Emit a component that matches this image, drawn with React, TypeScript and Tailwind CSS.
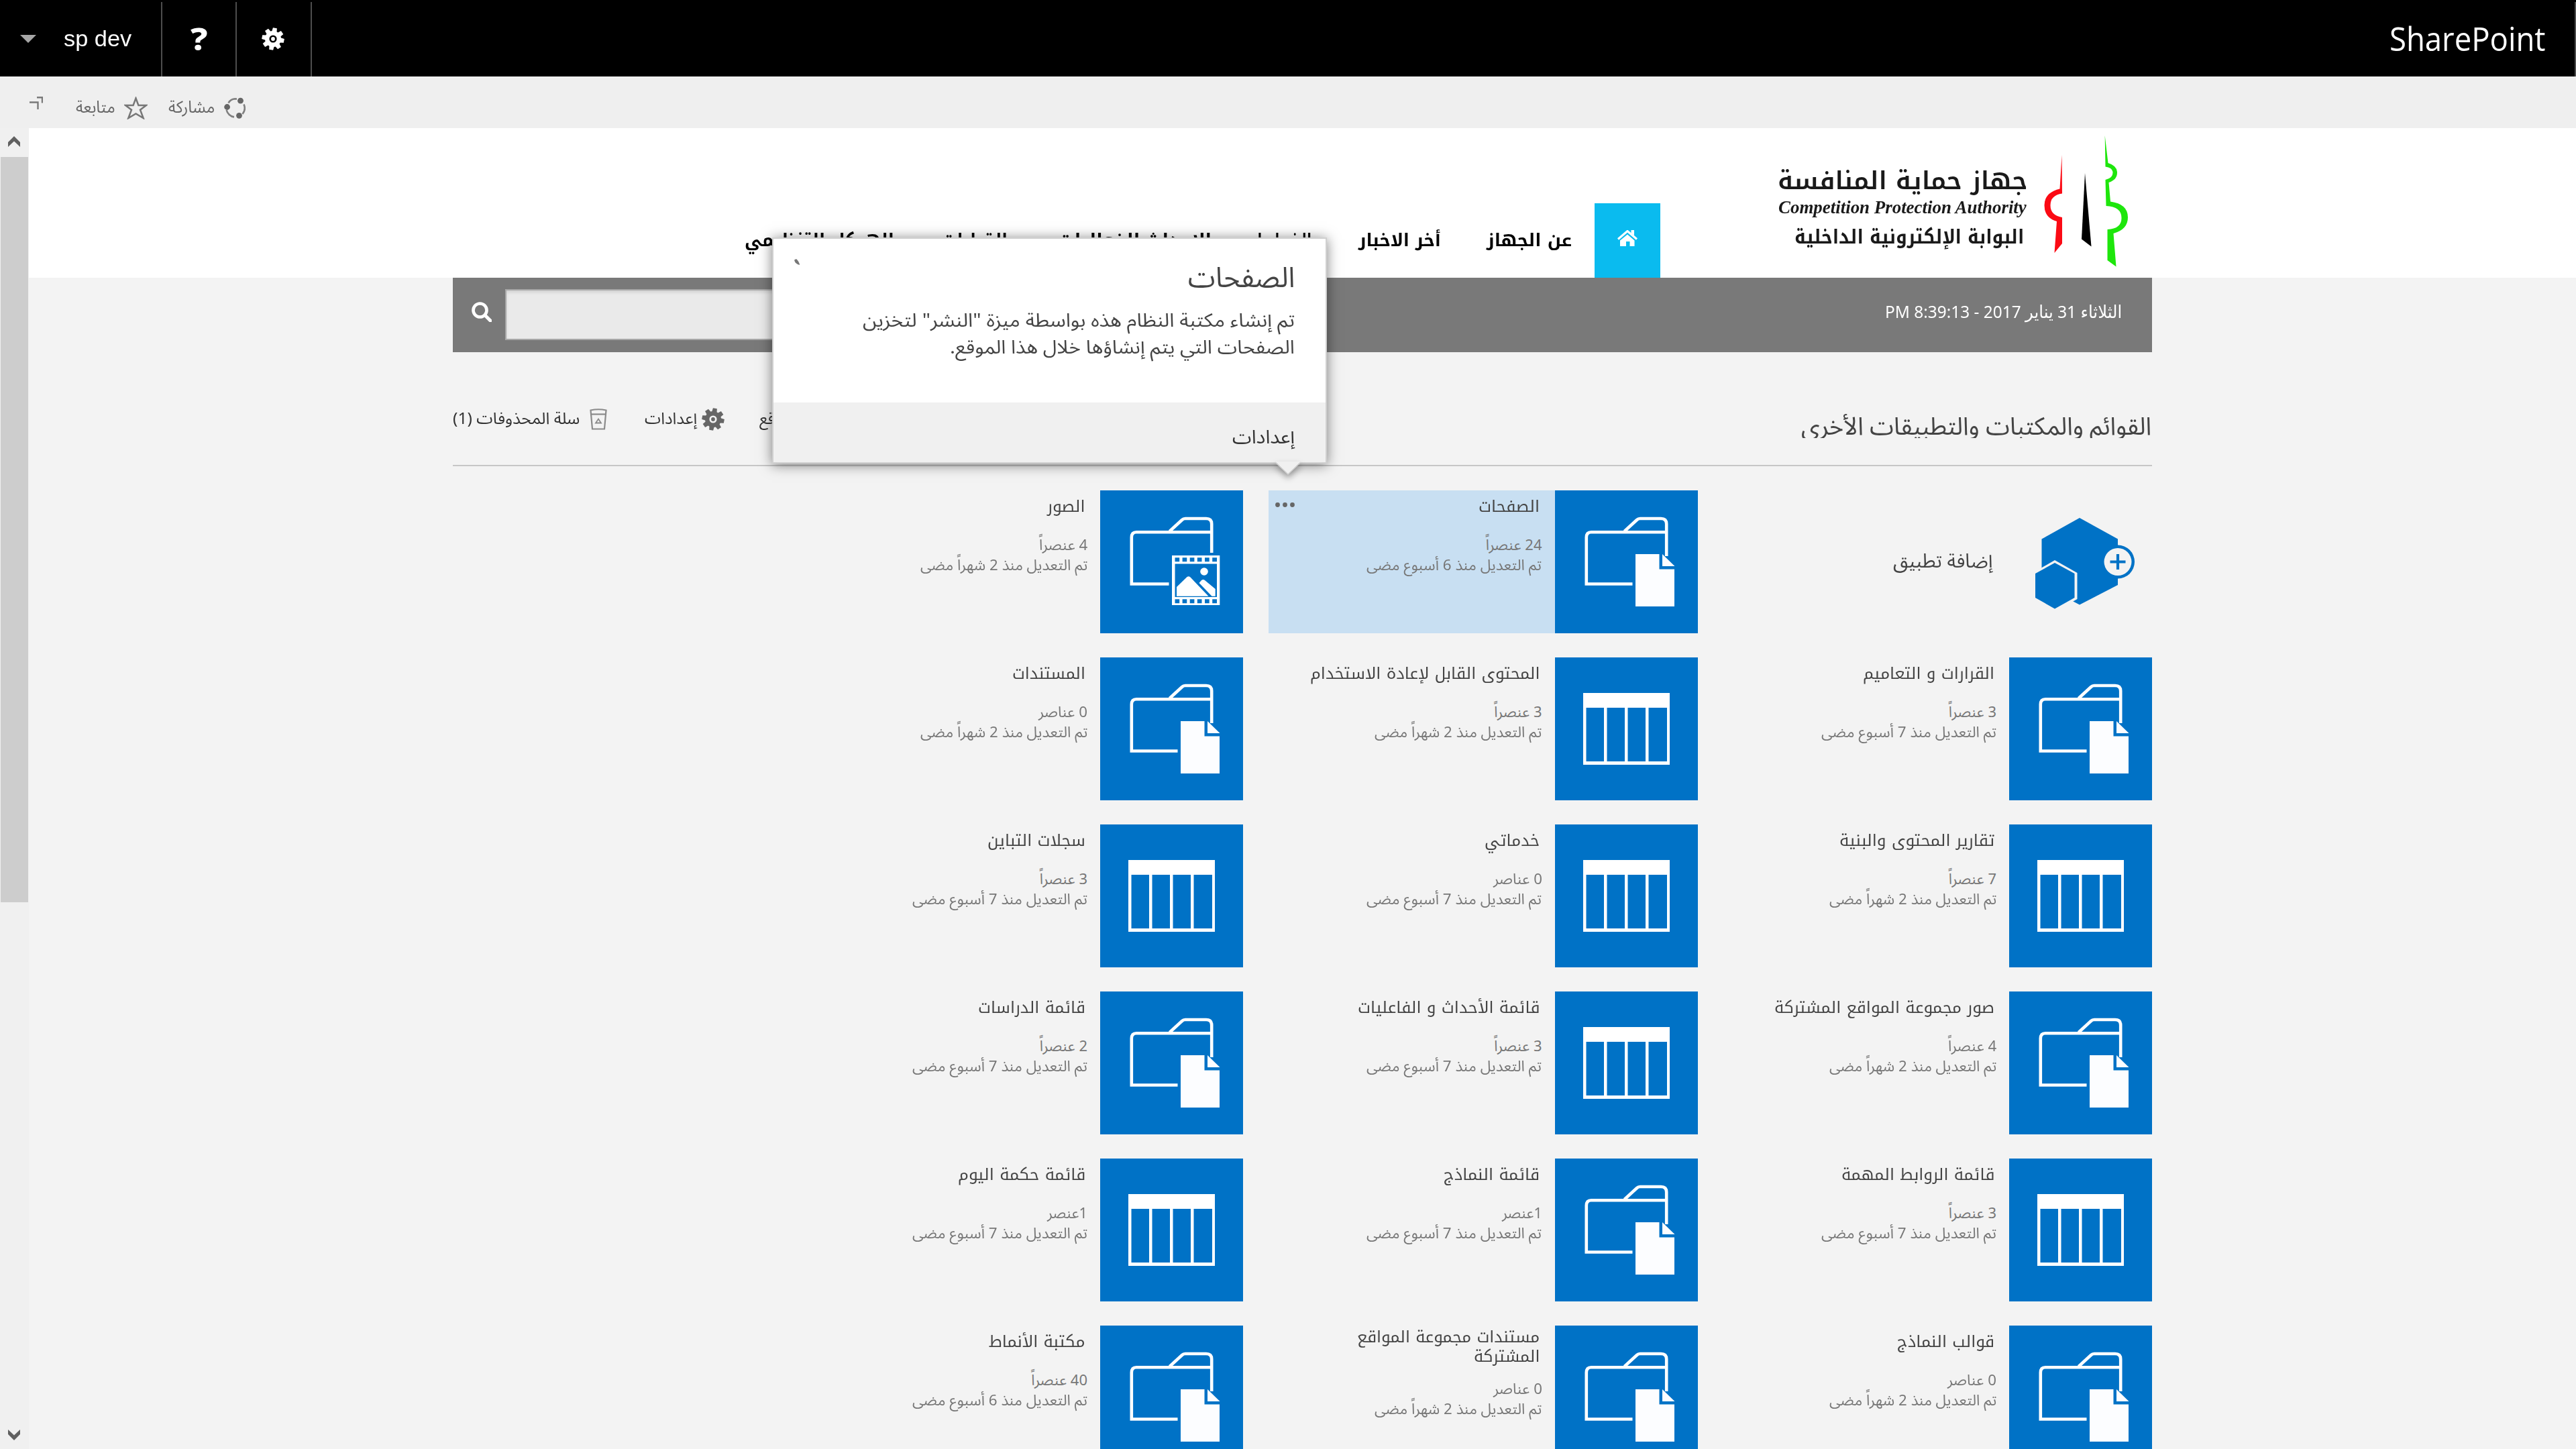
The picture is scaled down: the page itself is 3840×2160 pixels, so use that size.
import { useLayoutEffect, useRef, useState } from "react";
import type { ReactNode } from "react";

const KUFI = "font-['Noto_Kufi_Arabic','Noto_Sans','DejaVu_Sans',sans-serif]";
const SANS = "font-['Noto_Sans_Arabic','Noto_Sans','DejaVu_Sans',sans-serif]";

type LineProps = {
  /** width the line is condensed or stretched to */
  w: number;
  /** size, colour and font classes */
  className?: string;
  /** height class of the strut that fixes the baseline */
  strut: string;
  ltr?: boolean;
  children: ReactNode;
};

/** One line of text set on a fixed baseline and fitted to a width. */
function Line({ w, className = "", strut, ltr = false, children }: LineProps) {
  const ref = useRef<HTMLSpanElement>(null);
  const [scale, setScale] = useState(1);
  useLayoutEffect(() => {
    const fit = () => {
      if (ref.current) setScale(w / ref.current.offsetWidth);
    };
    fit();
    document.fonts?.ready.then(fit);
  }, [w]);
  return (
    <div
      dir={ltr ? "ltr" : "rtl"}
      className="flex shrink-0 items-baseline leading-[0] whitespace-nowrap"
      style={{ width: w }}
    >
      <span className={`w-0 shrink-0 ${strut}`} />
      <span
        ref={ref}
        className={`shrink-0 ${ltr ? "origin-left" : "origin-right"} ${className}`}
        style={{ transform: `scaleX(${scale})` }}
      >
        {children}
      </span>
    </div>
  );
}

function Gear({ className }: { className: string }) {
  const teeth = [0, 45, 90, 135, 180, 225, 270, 315];
  return (
    <svg viewBox="-17 -17 34 34" className={className}>
      <g fill="currentColor">
        {teeth.map((a) => (
          <path key={a} d="M-3.9 -9 L-3 -16.6 H3 L3.9 -9Z" transform={`rotate(${a + 10})`} />
        ))}
      </g>
      <circle r="8.8" fill="none" stroke="currentColor" strokeWidth="6.4" />
      <circle r="2.9" fill="currentColor" />
    </svg>
  );
}

function TopBar() {
  return (
    <header className="flex h-[114px] shrink-0 bg-black text-white">
      <div className="flex w-[240px] items-start">
        <svg viewBox="0 0 24 12" className="mt-[52px] ml-[30px] h-3 w-6 text-[#a6a6a6]">
          <path d="M0 0H24L12 12Z" fill="currentColor" />
        </svg>
        <div className="ml-[41px]">
          <Line ltr w={101} strut="h-[69px]" className="font-['Liberation_Sans',sans-serif] text-[33px]">
            sp dev
          </Line>
        </div>
      </div>
      <div className="mt-[3px] flex w-[111px] border-l-2 border-[#4d4d4d] pl-[42px]">
        <Line ltr w={26} strut="h-[72px]" className="font-['Noto_Sans',sans-serif] text-[46px] font-extrabold">
          ?
        </Line>
      </div>
      <div className="mt-[3px] flex w-[114px] border-x-2 border-[#4d4d4d] pl-[37px]">
        <Gear className="mt-[38px] h-[34px] w-[34px]" />
      </div>
      <div className="mt-[3px] ml-auto flex border-r-2 border-[#4d4d4d] pr-[43px]">
        <Line ltr w={233} strut="h-[73px]" className="font-['Open_Sans',sans-serif] text-[49px]">
          SharePoint
        </Line>
      </div>
    </header>
  );
}

function ActionBar() {
  return (
    <div className="flex h-[77px] shrink-0 bg-[#efefef] text-[#666666]">
      <svg viewBox="0 0 20 19" className="mt-[30px] ml-[44px] h-[19px] w-5">
        <path d="M11 1.2H19V9.5M0 8.5H12.5V19" fill="none" stroke="#7a7a7a" strokeWidth="2.4" />
      </svg>
      <div className="ml-[49px]">
        <Line w={59} strut="h-[54px]" className={`${SANS} text-[25px]`}>
          متابعة
        </Line>
      </div>
      <svg viewBox="0 0 35 34" className="mt-[30px] ml-[13px] h-[34px] w-[35px]">
        <path
          d="M17.5 2.5L21.4 13H33L24 19.8L28.6 32L17.5 25.4L6.4 32L11 19.8L2 13H13.6Z"
          fill="none"
          stroke="#777777"
          strokeWidth="2.5"
        />
      </svg>
      <div className="ml-[31px]">
        <Line w={69} strut="h-[54px]" className={`${SANS} text-[25px]`}>
          مشاركة
        </Line>
      </div>
      <svg viewBox="0 0 32 32" className="mt-[31px] ml-[14px] h-8 w-8">
        <g fill="none" stroke="#808080" strokeWidth="2.6">
          <path d="M6.5 8.5C9.5 3.5 14 1.8 19 2.6" />
          <path d="M29.5 10.5C31.8 16 30.5 21.5 27.5 25" />
          <path d="M3.6 19C5 24.5 9.5 28.8 15 29.4" />
        </g>
        <circle cx="24.5" cy="5.2" r="4.4" fill="#666" />
        <circle cx="4.6" cy="14.5" r="4.4" fill="#666" />
        <circle cx="22.5" cy="27.3" r="4.4" fill="#666" />
      </svg>
    </div>
  );
}

function ScrollBar() {
  return (
    <div className="flex w-[43px] shrink-0 flex-col bg-[#f0f0f0] text-[#606060]">
      <svg viewBox="0 0 18 16" className="mt-3 ml-3 h-4 w-[18px]">
        <path d="M9 0L18 9V16L9 7.5L0 16V9Z" fill="currentColor" />
      </svg>
      <div className="mt-[15px] ml-px h-[1111px] w-[41px] bg-[#cdcdcd]" />
      <svg viewBox="0 0 18 16" className="mt-auto mb-[13px] ml-3 h-4 w-[18px]">
        <path d="M9 16L18 7V0L9 8.5L0 0V7Z" fill="currentColor" />
      </svg>
    </div>
  );
}

function Logo() {
  return (
    <div className="flex items-start gap-[22px] pr-[33px]">
      <svg viewBox="3045 200 130 200" className="mt-[9px] h-[200px] w-[130px]">
        <path
          d="M3073.500 231L3070.500 281.500Q3047.500 287 3047.500 306Q3047.500 325 3066 330L3062.500 377L3074 363V324Q3056.500 321 3056.500 306Q3056.500 291 3074 288.500Z"
          fill="#fb0a14"
        />
        <path d="M3108 258L3103 356.500L3117.500 367.500Z" fill="#000" />
        <path
          d="M3137.700 202L3138.500 248.500Q3149.500 250 3149.500 257.500Q3149.500 265.500 3138.500 268L3139.500 307Q3162.500 308 3162.500 325Q3162.500 341 3141.500 342V388L3154.500 397.500L3150.500 348Q3172 342 3172 324Q3172 304 3146 300.500L3143.500 272Q3156 268 3156 257.500Q3156 247 3142.500 243Z"
          fill="#1ee60c"
        />
      </svg>
      <div className="flex flex-col text-[#1a1a1a]">
        <Line w={373} strut="h-[91px]" className={`${KUFI} text-[37px] font-semibold`}>
          جهاز حماية المنافسة
        </Line>
        <div className="pr-[2px]">
          <Line
            ltr
            w={370}
            strut="h-[36px]"
            className="font-['Liberation_Serif',serif] text-[28px] font-bold italic"
          >
            Competition Protection Authority
          </Line>
        </div>
        <div className="pr-[6px]">
          <Line w={342} strut="h-[45px]" className={`${KUFI} text-[29px] font-bold`}>
            البوابة الإلكترونية الداخلية
          </Line>
        </div>
      </div>
    </div>
  );
}

const navItems = [
  { label: "عن الجهاز", w: 127, gap: "mr-[34px]" },
  { label: "أخر الاخبار", w: 123, gap: "mr-[68px]" },
  { label: "الضوابط", w: 81, gap: "mr-[70px]" },
  { label: "الاحداث الفعاليات", w: 228, gap: "mr-[68px]" },
  { label: "القرارات", w: 97, gap: "mr-[76px]" },
  { label: "الهيكل التنظيمي", w: 223, gap: "mr-[72px]" },
];

function Masthead() {
  return (
    <div className="h-[223px] bg-white">
      <div dir="rtl" className="ml-[632px] flex h-full w-[2533px]">
        <Logo />
        <div className="mr-[175px] flex h-[111px] w-[98px] justify-center self-end bg-[#0abbef] pt-[40px]">
          <svg viewBox="0 0 30 24" className="h-6 w-[30px]">
            <path d="M1 13.500L15 1.500L29 13.500" fill="none" stroke="#fff" strokeWidth="3.200" />
            <path d="M20.500 0H25V8L20.500 4.500Z M15 6.500L25.500 15.500V24H18.500V17H13V24H4V15.500Z" fill="#fff" />
          </svg>
        </div>
        {navItems.map((n) => (
          <div key={n.label} className={n.gap}>
            <Line w={n.w} strut="h-[176px]" className={`${KUFI} text-[26px] font-bold text-black`}>
              {n.label}
            </Line>
          </div>
        ))}
      </div>
    </div>
  );
}

function SearchBar() {
  return (
    <div className="flex h-[111px] items-start justify-between bg-[#797979] text-white">
      <div className="flex">
        <svg viewBox="0 0 30 30" className="mt-[36px] ml-[28px] h-[30px] w-[30px]">
          <circle cx="12.500" cy="12.500" r="10" fill="none" stroke="#fff" strokeWidth="4.600" />
          <path d="M20 20L28 28" stroke="#fff" strokeWidth="5" strokeLinecap="round" />
        </svg>
        <div className="mt-[17px] ml-[20px] h-[76px] w-[480px] border-2 border-[#a8a8a8] bg-[#eaeaea] shadow-[inset_0_3px_4px_rgba(0,0,0,0.1)]" />
      </div>
      <div className="pr-[45px]">
        <Line w={353} strut="h-[60px]" className="font-['Noto_Sans','DejaVu_Sans',sans-serif] text-[26px]">
          الثلاثاء 31 يناير 2017 - 8:39:13 PM
        </Line>
      </div>
    </div>
  );
}

function ListHeader() {
  return (
    <div dir="rtl" className="flex h-[170px] items-start border-b-2 border-[#c6c6c6]">
      <div className="h-[128px] overflow-hidden pr-px">
        <Line w={522} strut="h-[123px]" className={`${SANS} text-[37px] text-[#444444]`}>
          القوائم والمكتبات والتطبيقات الأخرى
        </Line>
      </div>
      <div className="mr-auto flex items-start text-[#333333]">
        <Line w={200} strut="h-[107px]" className={`${SANS} text-[24px]`}>
          مهام سير عمل الموقع
        </Line>
        <Gear className="mt-[83px] mr-[52px] h-[34px] w-[34px] text-[#666666]" />
        <div className="mr-[7px]">
          <Line w={78} strut="h-[107px]" className={`${SANS} text-[24px]`}>
            إعدادات
          </Line>
        </div>
        <svg viewBox="0 0 26 32" className="mt-[84px] mr-[56px] h-8 w-[26px]">
          <g fill="none" stroke="#8a8a8a" strokeWidth="2.200">
            <path d="M1.500 2.500Q13 0 24.500 2.500L22 30.500H4Z" />
            <path d="M2 8.500H24" />
            <path d="M13 15.500L17 21.500H9Z" strokeWidth="1.800" />
          </g>
        </svg>
        <div className="mr-[15px]">
          <Line w={189} strut="h-[107px]" className={`${SANS} text-[24px]`}>
            سلة المحذوفات (1)
          </Line>
        </div>
      </div>
    </div>
  );
}

type Kind = "doc" | "list" | "image";

function TileIcon({ kind }: { kind: Kind }) {
  return (
    <svg viewBox="0 0 213 213" className="h-[213px] w-[213px] shrink-0 bg-[#0072c6]">
      {kind === "list" && (
        <path
          fillRule="evenodd"
          fill="#fff"
          d="M42 53H171V160H42Z M46.500 75V155H73V75Z M77.500 75V155H104V75Z M108.500 75V155H135V75Z M139.500 75V155H167V75Z"
        />
      )}
      {kind !== "list" && (
        <path
          fill="none"
          stroke="#fff"
          strokeWidth="4.600"
          d={
            kind === "doc"
              ? "M115.500 139.500H46.800V70Q46.800 62.200 54 62.200H164M103.500 61L122 44Q124 42 127 42H158Q166.200 42 166.200 50V98"
              : "M102.500 139.500H46.800V70Q46.800 62.200 54 62.200H164M103.500 61L122 44Q124 42 127 42H158Q166.200 42 166.200 50V93"
          }
        />
      )}
      {kind === "doc" && (
        <path fill="#fcfdff" d="M120 95H155.500V117.500H178V173H120Z M160 95L178.500 113H160Z" />
      )}
      {kind === "image" && (
        <g fill="#fff">
          <path
            fillRule="evenodd"
            d="M107 97H178.300V171H107Z M111.500 109.500V159H174V109.500Z M111.500 100.300V106.300H118.200V100.300Z M122.600 100.300V106.300H129.300V100.300Z M133.700 100.300V106.300H140.400V100.300Z M144.800 100.300V106.300H151.500V100.300Z M156 100.300V106.300H162.700V100.300Z M167.200 100.300V106.300H174V100.300Z M111.500 162.300V168.300H118.200V162.300Z M122.600 162.300V168.300H129.300V162.300Z M133.700 162.300V168.300H140.400V162.300Z M144.800 162.300V168.300H151.500V162.300Z M156 162.300V168.300H162.700V162.300Z M167.200 162.300V168.300H174V162.300Z"
          />
          <circle cx="155" cy="121" r="5.800" />
          <path d="M114 144L129.500 129Q131.700 127.500 134 129L161.500 157.700H114Z" />
          <path d="M147.500 138L151 134Q153.500 132 156 134L171.700 147V157.700H166.500Z" />
        </g>
      )}
    </svg>
  );
}

const AGO = {
  w6: { text: "تم التعديل منذ 6 أسبوع مضى", w: 261 },
  w7: { text: "تم التعديل منذ 7 أسبوع مضى", w: 261 },
  m2: { text: "تم التعديل منذ 2 شهراً مضى", w: 249 },
};

type App = {
  name: [string, number][];
  count: [string, number];
  ago: keyof typeof AGO;
  kind: Kind;
  active?: boolean;
};

const apps: App[] = [
  { name: [["الصفحات", 91]], count: ["24 عنصراً", 84], ago: "w6", kind: "doc", active: true },
  { name: [["الصور", 57]], count: ["4 عنصراً", 72], ago: "m2", kind: "image" },
  { name: [["القرارات و التعاميم", 196]], count: ["3 عنصراً", 71], ago: "w7", kind: "doc" },
  { name: [["المحتوى القابل لإعادة الاستخدام", 343]], count: ["3 عنصراً", 71], ago: "m2", kind: "list" },
  { name: [["المستندات", 109]], count: ["0 عناصر", 73], ago: "m2", kind: "doc" },
  { name: [["تقارير المحتوى والبنية", 231]], count: ["7 عنصراً", 71], ago: "m2", kind: "list" },
  { name: [["خدماتي", 82]], count: ["0 عناصر", 73], ago: "w7", kind: "list" },
  { name: [["سجلات التباين", 146]], count: ["3 عنصراً", 71], ago: "w7", kind: "list" },
  { name: [["صور مجموعة المواقع المشتركة", 328]], count: ["4 عنصراً", 72], ago: "m2", kind: "doc" },
  { name: [["قائمة الأحداث و الفاعليات", 271]], count: ["3 عنصراً", 71], ago: "w7", kind: "list" },
  { name: [["قائمة الدراسات", 160]], count: ["2 عنصراً", 71], ago: "w7", kind: "doc" },
  { name: [["قائمة الروابط المهمة", 228]], count: ["3 عنصراً", 71], ago: "w7", kind: "list" },
  { name: [["قائمة النماذج", 143]], count: ["1عنصر", 60], ago: "w7", kind: "doc" },
  { name: [["قائمة حكمة اليوم", 190]], count: ["1عنصر", 60], ago: "w7", kind: "list" },
  { name: [["قوالب النماذج", 145]], count: ["0 عناصر", 73], ago: "m2", kind: "doc" },
  {
    name: [
      ["مستندات مجموعة المواقع", 272],
      ["المشتركة", 98],
    ],
    count: ["0 عناصر", 73],
    ago: "m2",
    kind: "doc",
  },
  { name: [["مكتبة الأنماط", 144]], count: ["40 عنصراً", 84], ago: "w6", kind: "doc" },
];

function AppTile({ app }: { app: App }) {
  const meta = `${SANS} text-[22px] text-[#777777]`;
  const title = `${KUFI} text-[24px] text-[#444444]`;
  const two = app.name.length > 1;
  return (
    <div className={`relative flex h-[213px] w-[640px] ${app.active ? "bg-[#c8dff2]" : ""}`}>
      <TileIcon kind={app.kind} />
      <div className="flex flex-col pr-[19px]">
        <div className="pr-[3px]">
          {app.name.map(([text, w], i) => (
            <Line key={text} w={w} strut={two ? (i ? "h-[29px]" : "h-[25px]") : "h-8"} className={title}>
              {text}
            </Line>
          ))}
        </div>
        <Line w={app.count[1]} strut={two ? "h-[48px]" : "h-[57px]"} className={meta}>
          {app.count[0]}
        </Line>
        <Line w={AGO[app.ago].w} strut="h-[30px]" className={meta}>
          {AGO[app.ago].text}
        </Line>
      </div>
      {app.active && (
        <svg viewBox="0 0 29 7" className="absolute top-[18px] left-[10px] h-[7px] w-[29px] text-[#666666]">
          <g fill="currentColor">
            <circle cx="3.500" cy="3.500" r="3.400" />
            <circle cx="14.500" cy="3.500" r="3.400" />
            <circle cx="25.500" cy="3.500" r="3.400" />
          </g>
        </svg>
      )}
    </div>
  );
}

function AddApp() {
  return (
    <div className="flex h-[213px] w-[640px]">
      <svg viewBox="0 0 213 213" className="h-[213px] w-[213px] shrink-0">
        <path d="M105 41L162 72.500V141L105 170.500L48.500 141V72.500Z" fill="#0072c6" />
        <path d="M68 104L101.500 123V162L68 181L35 162V123Z" fill="#f3f3f3" />
        <path d="M68 108L97.500 124V160L68 176.500L39 160V124Z" fill="#0072c6" />
        <circle cx="162" cy="106.500" r="25" fill="#0072c6" />
        <circle cx="162" cy="106.500" r="20.500" fill="#f3f3f3" />
        <path d="M150.500 106.500H173.500M162 95V118" stroke="#0072c6" strokeWidth="4.200" />
      </svg>
      <div className="pr-[25px]">
        <Line w={149} strut="h-[115px]" className={`${SANS} text-[29px] text-[#444444]`}>
          إضافة تطبيق
        </Line>
      </div>
    </div>
  );
}

function Callout() {
  const body = `${SANS} text-[28px] text-[#444444]`;
  return (
    <div
      dir="rtl"
      className="absolute top-[354px] left-[1151px] flex h-[337px] w-[827px] flex-col border-2 border-[#d0d0d0] bg-white shadow-[0_2px_18px_rgba(0,0,0,0.5)]"
    >
      <div className="h-[244px] pr-[46px]">
        <Line w={159} strut="h-[72px]" className={`${SANS} text-[42px] text-[#444444]`}>
          الصفحات
        </Line>
        <Line w={644} strut="h-[59px]" className={body}>
          تم إنشاء مكتبة النظام هذه بواسطة ميزة "النشر" لتخزين
        </Line>
        <Line w={514} strut="h-[40px]" className={body}>
          الصفحات التي يتم إنشاؤها خلال هذا الموقع.
        </Line>
      </div>
      <div className="flex-1 bg-[#f0f0f0] pr-[46px]">
        <Line w={93} strut="h-[61px]" className={`${SANS} text-[28px] text-[#333333]`}>
          إعدادات
        </Line>
      </div>
      <svg viewBox="0 0 8 9" className="absolute top-[30px] left-[31px] h-[9px] w-2">
        <path d="M0 1.500L3 0Q7.500 4 8 9L5 8Q1 6 0 1.500Z" fill="#777" />
      </svg>
      <svg
        viewBox="0 0 40 20"
        className="absolute top-[332px] left-[747px] h-5 w-10 overflow-visible drop-shadow-[0_5px_5px_rgba(0,0,0,0.35)]"
      >
        <path d="M1 0L20 19L39 0Z" fill="#f0f0f0" />
        <path d="M1 1L20 19L39 1" fill="none" stroke="#d0d0d0" strokeWidth="1.500" />
      </svg>
    </div>
  );
}

export default function App() {
  return (
    <div className="relative flex h-[2160px] w-[3840px] flex-col overflow-hidden bg-[#f3f3f3]">
      <TopBar />
      <ActionBar />
      <div className="flex min-h-0 flex-1">
        <ScrollBar />
        <main className="min-w-0 flex-1">
          <Masthead />
          <div className="ml-[632px] w-[2533px]">
            <SearchBar />
            <ListHeader />
            <div
              dir="rtl"
              className="mt-[36px] grid grid-cols-[640px_640px_640px] gap-x-[37.5px] gap-y-[36px]"
            >
              <AddApp />
              {apps.map((a) => (
                <AppTile key={a.name[0][0]} app={a} />
              ))}
            </div>
          </div>
        </main>
      </div>
      <Callout />
    </div>
  );
}
